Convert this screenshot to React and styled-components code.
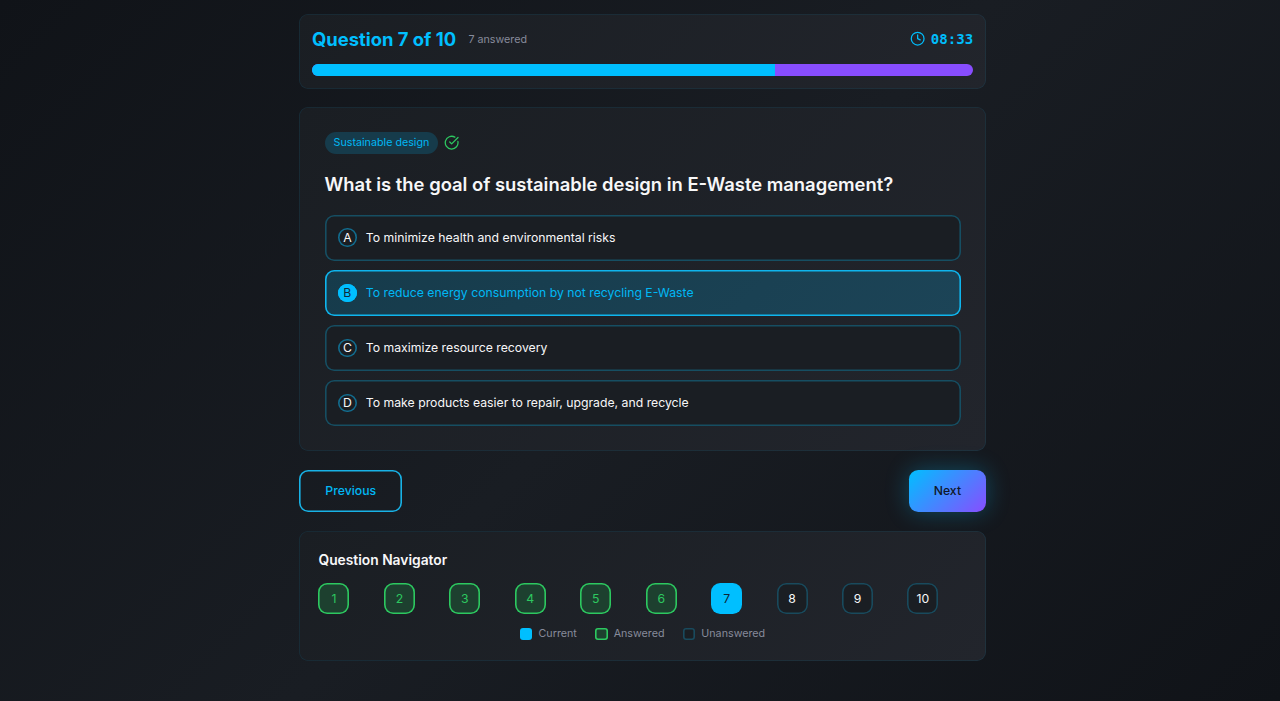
import React from "react";
import styled, { createGlobalStyle, css } from "styled-components";
import { CircleCheckBig, Clock } from "lucide-react";

const Global = createGlobalStyle`
  *, *::before, *::after { box-sizing: border-box; }
  html { background: #10131a; }
  body {
    margin: 0;
    font-family: Inter, "Liberation Sans", sans-serif;
    color: #f7f7f8;
    overflow: hidden;
  }
  button { font-family: inherit; border: 0; margin: 0; cursor: pointer; }
`;

const Page = styled.main`
  height: 701px;
  padding-top: 14px;
  background: linear-gradient(135deg, #101318 0%, #191d23 50%, #101318 100%);
`;

const Column = styled.div`
  width: 686.5px;
  margin-left: 299.4px;
  display: flex;
  flex-direction: column;
  gap: 18.4px;
`;

const Card = styled.section`
  height: ${(p) => p.$height}px;
  padding: ${(p) => p.$padding};
  border-radius: 9.2px;
  background: linear-gradient(135deg, #1a1e23, #22252c);
  box-shadow: inset 0 0 0 0.8px rgba(0, 191, 255, 0.1);
`;

const HeaderRow = styled.div`
  display: flex;
  align-items: center;
  justify-content: space-between;
  height: 25px;
`;

const Group = styled.div`
  display: flex;
  align-items: center;
  gap: ${(p) => p.$gap}px;
`;

const Counter = styled.h1`
  margin: 0;
  font-size: 18.4px;
  line-height: 25px;
  font-weight: 700;
  color: #00bfff;
`;

const Muted = styled.span`
  font-size: 10.73px;
  line-height: 15px;
  color: #878b9b;
`;

const Timer = styled.div`
  display: flex;
  align-items: center;
  gap: 6px;
  color: #00bcfa;
  font: 700 14.1px/20px "DejaVu Sans Mono", "Liberation Mono", monospace;
`;

const Track = styled.div`
  height: 12.3px;
  margin-top: 12.2px;
  border-radius: 6.2px;
  overflow: hidden;
  background: #884dff;
`;

const Fill = styled.div`
  height: 100%;
  background: #00bfff;
`;

const Tag = styled.span`
  height: 21.4px;
  padding: 0 9px;
  border-radius: 11px;
  background: #163b4b;
  color: #00b8f5;
  font-size: 10.73px;
  line-height: 21px;
`;

const Prompt = styled.h2`
  margin: 18px 0 0;
  font-size: 18.4px;
  line-height: 25px;
  font-weight: 600;
`;

const Options = styled.div`
  display: flex;
  flex-direction: column;
  gap: 9.2px;
  margin-top: 18px;
`;

const Option = styled.button`
  display: flex;
  align-items: center;
  gap: 9.2px;
  height: 45.9px;
  padding: 0 13.6px;
  border-radius: 9.2px;
  text-align: left;
  font-size: 12.26px;
  line-height: 15px;
  color: ${(p) => (p.$on ? "#00b8f5" : "#f7f7f8")};
  background: ${(p) => (p.$on ? "linear-gradient(135deg, #163b4b, #1c4457)" : "#1a1e23")};
  box-shadow: inset 0 0 0 1.6px ${(p) => (p.$on ? "#0fb5ed" : "#164e62")};
`;

const Letter = styled.span`
  display: flex;
  align-items: center;
  justify-content: center;
  width: 18.4px;
  height: 18.4px;
  border-radius: 50%;
  color: ${(p) => (p.$on ? "#102a3a" : "#f7f7f8")};
  background: ${(p) => (p.$on ? "#00bfff" : "transparent")};
  box-shadow: inset 0 0 0 1.6px ${(p) => (p.$on ? "#00bfff" : "#126c8e")};
`;

const Actions = styled.div`
  display: flex;
  justify-content: space-between;
  height: 42.4px;
`;

const Action = styled.button`
  width: ${(p) => p.$width}px;
  padding: 0;
  border-radius: 9.2px;
  font-size: 12.26px;
  font-weight: 500;
  ${(p) =>
    p.$primary
      ? css`
          color: #0f1729;
          background: linear-gradient(135deg, #00bfff, #884dff);
          box-shadow: 0 0 23px rgba(0, 191, 255, 0.3);
        `
      : css`
          color: #00b8f5;
          background: transparent;
          box-shadow: inset 0 0 0 1.6px #18b2e6;
        `}
`;

const NavTitle = styled.h3`
  margin: 0;
  font-size: 13.8px;
  line-height: 20px;
  font-weight: 600;
`;

const NavGrid = styled.div`
  display: grid;
  grid-template-columns: repeat(10, 1fr);
  gap: 6.13px;
  margin-top: 13px;
`;

const swatch = {
  current: css`
    color: #0f2436;
    background: #00bfff;
  `,
  answered: css`
    color: #2dc860;
    background: #1d402f;
    box-shadow: inset 0 0 0 1.6px #2dc860;
  `,
  unanswered: css`
    color: #f7f7f8;
    background: #1a1e23;
    box-shadow: inset 0 0 0 1.6px #194a5d;
  `,
};

const NavButton = styled.button`
  width: 31px;
  height: 31px;
  padding: 0;
  border-radius: 9.2px;
  font-size: 12.26px;
  line-height: 15px;
  ${(p) => swatch[p.$state]}
`;

const Legend = styled.div`
  display: flex;
  justify-content: center;
  gap: 18.4px;
  margin-top: 12.6px;
`;

const Chip = styled.span`
  width: 12.3px;
  height: 12.3px;
  border-radius: 3px;
  ${(p) => swatch[p.$state]}
`;

const options = [
  ["A", "To minimize health and environmental risks"],
  ["B", "To reduce energy consumption by not recycling E-Waste"],
  ["C", "To maximize resource recovery"],
  ["D", "To make products easier to repair, upgrade, and recycle"],
];

const current = 7;
const stateOf = (n) => (n === current ? "current" : n < current ? "answered" : "unanswered");

export default function App() {
  return (
    <>
      <Global />
      <Page>
        <Column>
          <Card $height={75} $padding="12.6px">
            <HeaderRow>
              <Group $gap={12.3}>
                <Counter>Question 7 of 10</Counter>
                <Muted>7 answered</Muted>
              </Group>
              <Timer>
                <Clock size={15.3} strokeWidth={2} />
                <span>08:33</span>
              </Timer>
            </HeaderRow>
            <Track>
              <Fill style={{ width: `${(current / 10) * 100}%` }} />
            </Track>
          </Card>

          <Card $height={344} $padding="24.9px 25.2px">
            <Group $gap={6.1}>
              <Tag>Sustainable design</Tag>
              <CircleCheckBig size={15.3} strokeWidth={2} color="#2dc860" />
            </Group>
            <Prompt>What is the goal of sustainable design in E-Waste management?</Prompt>
            <Options>
              {options.map(([letter, text]) => (
                <Option key={letter} $on={letter === "B"}>
                  <Letter $on={letter === "B"}>{letter}</Letter>
                  <span>{text}</span>
                </Option>
              ))}
            </Options>
          </Card>

          <Actions>
            <Action $width={102.7}>Previous</Action>
            <Action $width={77} $primary>Next</Action>
          </Actions>

          <Card $height={130} $padding="19.3px 19.1px">
            <NavTitle>Question Navigator</NavTitle>
            <NavGrid>
              {Array.from({ length: 10 }, (_, i) => i + 1).map((n) => (
                <NavButton key={n} $state={stateOf(n)}>{n}</NavButton>
              ))}
            </NavGrid>
            <Legend>
              {["Current", "Answered", "Unanswered"].map((name) => (
                <Group key={name} $gap={6.1}>
                  <Chip $state={name.toLowerCase()} />
                  <Muted>{name}</Muted>
                </Group>
              ))}
            </Legend>
          </Card>
        </Column>
      </Page>
    </>
  );
}
